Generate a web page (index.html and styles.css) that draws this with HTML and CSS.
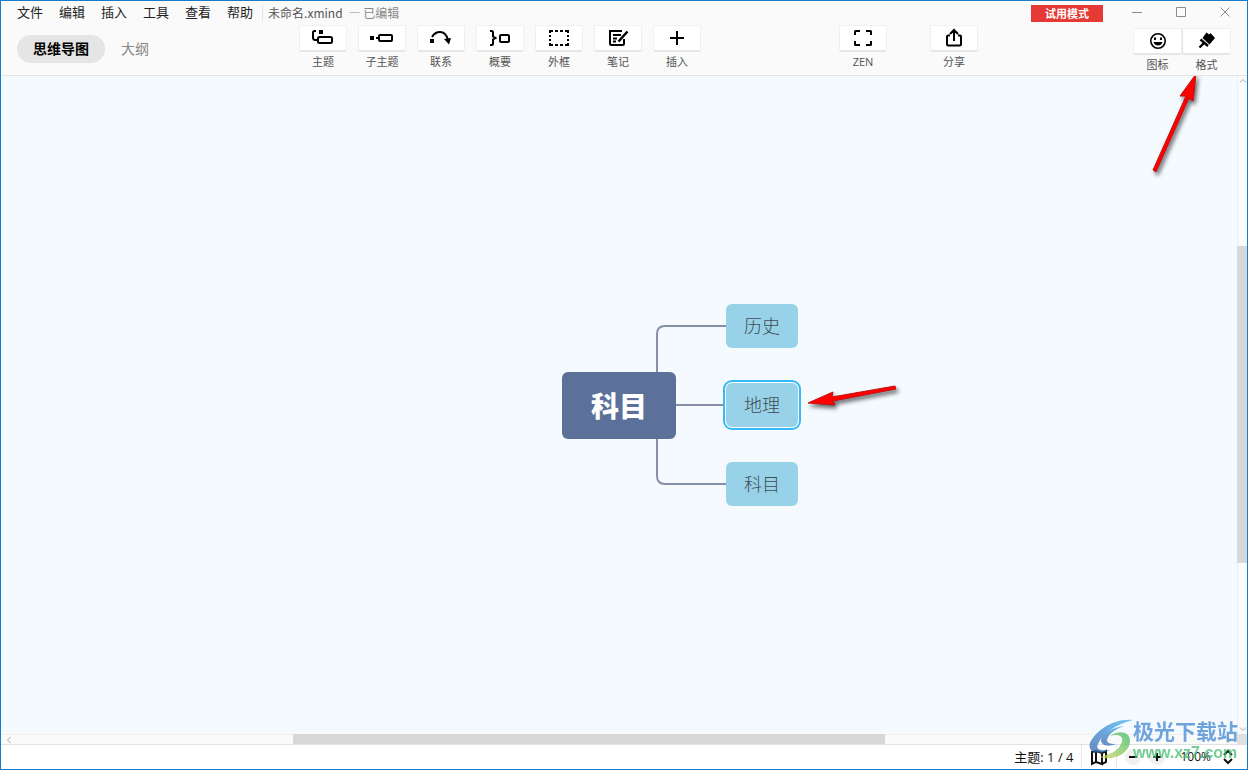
FILE: index.html
```html
<!DOCTYPE html>
<html lang="zh-CN">
<head>
<meta charset="utf-8">
<title>未命名.xmind</title>
<link rel="stylesheet" href="styles.css">
</head>
<body>
<div class="window">
  <header class="header">
    <div class="titlebar">
      <nav class="menu">
        <button>文件</button><button>编辑</button><button>插入</button><button>工具</button><button>查看</button><button>帮助</button>
      </nav>
      <div class="doc"><span class="doc-name">未命名.xmind</span><span class="doc-state">— 已编辑</span></div>
      <button class="trial">试用模式</button>
      <div class="controls">
        <button aria-label="最小化"><svg width="12" height="12" viewBox="0 0 12 12"><path d="M1 5.500h10"/></svg></button>
        <button aria-label="最大化"><svg width="12" height="12" viewBox="0 0 12 12"><path d="M1.500 0.500h9v9h-9z"/></svg></button>
        <button aria-label="关闭"><svg width="12" height="12" viewBox="0 0 12 12"><path d="M1.500 0.500l9 9m0-9l-9 9"/></svg></button>
      </div>
    </div>
    <div class="toolbar">
      <div class="tabs">
        <button class="tab active">思维导图</button>
        <button class="tab">大纲</button>
      </div>
      <div class="tools">
        <button class="tool"><span class="face"><svg width="24" height="24" viewBox="0 0 24 24"><path d="M5 5H3.500Q2 5 2 6.500V11.500Q2 14 4.500 14H6.500"/><rect x="7" y="11" width="14" height="6" rx="1.500"/><path class="solid" d="M8 4h4v4H8z"/></svg></span>主题</button>
        <button class="tool"><span class="face"><svg width="24" height="24" viewBox="0 0 24 24"><path class="solid" d="M0 10h4v4H0z"/><path d="M6 12h3"/><rect x="9" y="9" width="13" height="6" rx="1"/></svg></span>子主题</button>
        <button class="tool"><span class="face"><svg width="24" height="24" viewBox="0 0 24 24"><path class="solid" d="M1 13h4v4H1zM15 13l7-1-2 6.500z"/><path d="M3 11Q6 6 11 6Q17 6 19 14"/></svg></span>联系</button>
        <button class="tool"><span class="face"><svg width="24" height="24" viewBox="0 0 24 24"><path d="M2 5H3.500Q5 5 5 6.500V10.500L7.500 12L5 13.500V17.500Q5 19 3.500 19H2"/><rect x="12" y="9" width="9" height="7" rx="1"/></svg></span>概要</button>
        <button class="tool"><span class="face"><svg width="24" height="24" viewBox="0 0 24 24"><path d="M3 7V5H6M8 5h3M13 5h3M18 5H21V7M21 9v2M21 13v2M21 17V19H18M16 19h-3M11 19H8M6 19H3V17M3 15v-2M3 11V9"/></svg></span>外框</button>
        <button class="tool"><span class="face"><svg width="24" height="24" viewBox="0 0 24 24"><path d="M16 5H4v12.500Q4 19 5.500 19H16.500Q18 19 18 17.500V13M7 9h8M7 12.500h4M7 15.500h3"/><path d="M12.500 15.500L21.500 5.500" stroke-width="2.500"/></svg></span>笔记</button>
        <button class="tool"><span class="face"><svg width="24" height="24" viewBox="0 0 24 24"><path d="M12 5v14M5 12h14"/></svg></span>插入</button>
      </div>
      <button class="tool zen"><span class="face"><svg width="24" height="24" viewBox="0 0 24 24"><path d="M4 9V5.500Q4 5 4.500 5H9M15 5h4.500Q20 5 20 5.500V9M20 15v3.500Q20 19 19.500 19H15M9 19H4.500Q4 19 4 18.500V15"/></svg></span>ZEN</button>
      <button class="tool share"><span class="face"><svg width="24" height="24" viewBox="0 0 24 24"><path d="M8 9.500H6Q5 9.500 5 10.500V18Q5 19.500 6.500 19.500H17.500Q19 19.500 19 18V10.500Q19 9.500 18 9.500H16M12 15V4.500M8 8l4-4 4 4"/></svg></span>分享</button>
      <div class="panels">
        <button class="tool"><span class="face"><svg width="24" height="24" viewBox="0 0 24 24"><circle cx="12" cy="12" r="7.200" stroke-width="1.600"/><path class="solid" d="M8 8.500h2v2.500H8zM14 8.500h2v2.500h-2zM7.500 13h9Q15.500 16.500 12 16.500T7.500 13z"/></svg></span>图标</button>
        <button class="tool"><span class="face"><svg width="24" height="24" viewBox="0 0 24 24"><path class="solid" d="M11.500 3.500L14 5.500 15.500 4 20 9 14.500 15.500 7.500 9z"/><path d="M5.500 10.500L13 17M9 14L4.500 18.500" stroke-width="2.400"/></svg></span>格式</button>
      </div>
    </div>
  </header>

  <main class="workspace">
    <section class="canvas">
      <div class="map">
        <svg class="links" width="1" height="1"><path d="M38 -33V-71Q38 -79 46 -79H107M57 0H107M38 33V71Q38 79 46 79H107"/></svg>
        <div class="topic root">科目</div>
        <div class="topic first">历史</div>
        <div class="topic second selected">地理</div>
        <div class="topic third">科目</div>
        <svg class="pointer near" width="100" height="36" viewBox="0 0 100 36"><path d="M2 20L27 9 26 14 89 3 90 6 27 18 29 22z"/></svg>
      </div>
      <svg class="pointer far" width="56" height="110" viewBox="0 0 56 110"><path d="M46 3L30 25 36 25 3 99 6 101 39 27 43 30z"/></svg>
    </section>
    <div class="vscroll"><svg class="up" width="8" height="8" viewBox="0 0 8 8"><path d="M1 5.500l3-3 3 3"/></svg><span class="thumb"></span><svg class="down" width="8" height="8" viewBox="0 0 8 8"><path d="M1 2.500l3 3 3-3"/></svg></div>
    <div class="hscroll"><svg class="back" width="8" height="8" viewBox="0 0 8 8"><path d="M5.500 1l-3 3 3 3"/></svg><span class="thumb"></span><svg class="next" width="8" height="8" viewBox="0 0 8 8"><path d="M2.500 1l3 3-3 3"/></svg></div>
    <div class="corner"></div>
  </main>

  <footer class="status">
    <span class="count">主题: 1 / 4</span>
    <button class="overview" aria-label="导航图"><svg width="18" height="18" viewBox="0 0 18 18"><path d="M2 4L6 3v11L2 16zM6 3l6 2v11l-6-2M12 5l4-2v11L12 16"/></svg></button>
    <div class="zoom">
      <button class="round" aria-label="缩小"><svg width="10" height="10" viewBox="0 0 10 10"><path d="M1 5h8"/></svg></button>
      <button class="round" aria-label="放大"><svg width="10" height="10" viewBox="0 0 10 10"><path d="M1 5h8M5 1v8"/></svg></button>
      <button class="level">100%<svg width="10" height="16" viewBox="0 0 10 16"><path d="M1 6l4-4 4 4M1 10l4 4 4-4"/></svg></button>
    </div>
  </footer>

  <div class="watermark">
    <svg width="44" height="42" viewBox="0 0 44 42">
      <defs>
        <linearGradient id="sky" x1="0" y1="1" x2="1" y2="0"><stop offset="0" stop-color="#3567ad"/><stop offset="1" stop-color="#42b5f5"/></linearGradient>
        <linearGradient id="leaf" x1="0" y1="1" x2="1" y2="0"><stop offset="0" stop-color="#d4d75a"/><stop offset="1" stop-color="#35b866"/></linearGradient>
      </defs>
      <path fill="url(#sky)" d="M44 1C23-1 6 13 1 24C-2 34 10 36 21 31C13 32 6 31 9 25C14 14 27 5 44 1z"/>
      <path fill="url(#sky)" d="M35 7C24 8 12 15 12 22C13 27 20 28 27 25C21 25 18 24 18 21C20 14 27 10 35 7z"/>
      <path fill="url(#leaf)" d="M21 17C30 14 36 18 32 25C29 32 20 36 10 38C28 43 41 32 41 22C41 12 29 11 21 17z"/>
    </svg>
    <div class="brand"><span class="brand-name">极光下载站</span><span class="brand-url">www.xz7.com</span></div>
  </div>
</div>
</body>
</html>
```
FILE: styles.css
```css
* { box-sizing: border-box; }
body {
  margin: 0;
  font-family: "Open Sans", "Noto Sans CJK SC", sans-serif;
  font-size: 13px;
  color: #222;
}
button {
  margin: 0;
  padding: 0;
  border: 0;
  background: none;
  font: inherit;
  color: inherit;
}
svg { display: block; flex: none; fill: none; stroke: currentColor; }
.window {
  position: relative;
  display: flex;
  flex-direction: column;
  height: 100vh;
  border: 1px solid #1a7bc9;
  background: #fff;
  overflow: hidden;
}

.header { background: #fafafa; border-bottom: 1px solid #e4e4e4; }
.titlebar { display: flex; align-items: center; height: 23px; }
.menu { display: flex; gap: 16px; padding: 0 0 2px 16px; line-height: 20px; }
.doc {
  display: flex;
  gap: 6px;
  margin-left: 9px;
  padding-left: 5px;
  border-left: 1px solid #e4e4e4;
  font-family: "Noto Sans CJK SC", sans-serif;
  font-size: 12px;
  line-height: 16px;
}
.doc-name { color: #555; }
.doc-state { color: #888; }
.trial {
  width: 72px;
  margin: 2px 12px 0 auto;
  background: #e53935;
  color: #fff;
  font-size: 11px;
  font-weight: 700;
  line-height: 17px;
}
.controls { display: flex; color: #8c8c8c; }
.controls button { display: grid; place-items: center; width: 44px; height: 22px; }

.toolbar { display: flex; align-items: flex-start; height: 51px; padding-right: 16px; }
.tabs { display: flex; flex: 0 0 298px; gap: 16px; padding: 11px 0 0 16px; }
.tab { height: 28px; padding-bottom: 2px; font-size: 14px; color: #888; }
.tab.active {
  width: 88px;
  border-radius: 14px;
  background: #e5e5e5;
  color: #000;
  font-weight: 700;
}
.tools { display: flex; gap: 11px; }
.tool {
  display: flex;
  flex-direction: column;
  align-items: center;
  gap: 2px;
  width: 48px;
  padding-top: 1px;
  font-size: 11px;
  line-height: 16px;
  color: #555;
}
.face {
  display: grid;
  place-items: center;
  width: 48px;
  height: 27px;
  border: 1px solid #f0f0f0;
  border-bottom: 2px solid #e6e6e6;
  border-radius: 2px;
  background: #fff;
  color: #000;
}
.face svg { stroke-width: 2; }
.solid { fill: currentColor; stroke: none; }
.zen { margin-left: auto; }
.share { margin: 0 155px 0 43px; }
.panels { display: flex; padding-top: 3px; }
.panels .tool { width: 49px; }
.panels .face { width: 49px; }
.panels .tool + .tool .face { border-left-color: #e2e2e2; }

.workspace {
  display: grid;
  flex: 1;
  min-height: 0;
  grid-template: minmax(0, 1fr) 11px / minmax(0, 1fr) 10px;
}
.canvas { position: relative; overflow: hidden; background: #f5faff; }
.map { position: absolute; left: 50%; top: 50%; }
.links { position: absolute; left: 0; top: 0; overflow: visible; stroke: #8590a8; stroke-width: 2; }
.topic {
  position: absolute;
  left: 107px;
  display: grid;
  place-items: center;
  width: 72px;
  height: 44px;
  padding-bottom: 2px;
  border-radius: 6px;
  background: #97d2e8;
  color: #434b54;
  font-size: 18px;
  font-weight: 300;
}
.root {
  left: -57px;
  top: -33px;
  width: 114px;
  height: 67px;
  background: #5b7199;
  color: #fff;
  font-size: 28px;
  font-weight: 900;
}
.first { top: -101px; }
.second { top: -22px; }
.third { top: 57px; }
.selected { box-shadow: 0 0 0 1px #fff; outline: 2px solid #35baf8; outline-offset: 1px; }
.pointer {
  position: absolute;
  fill: #f00;
  stroke: #c01010;
  stroke-width: 1;
  filter: drop-shadow(2px 3px 2px rgb(0 0 0 / 60%));
}
.near { left: 187px; top: -22px; }
.far { right: 31px; top: -5px; }

.vscroll, .hscroll { position: relative; background: #fafafa; color: #aaa; }
.vscroll { border-left: 1px solid #eee; }
.hscroll { border-top: 1px solid #eee; border-bottom: 1px solid #e2e2e2; }
.thumb { position: absolute; background: #d8d8d8; }
.vscroll .thumb { left: -1px; right: 0; top: 25.8%; height: 48.2%; }
.hscroll .thumb { top: -1px; bottom: 0; left: 23.6%; width: 47.9%; }
.up, .down, .back, .next { position: absolute; }
.up { top: 1px; left: 1px; }
.down { bottom: 1px; left: 1px; }
.back { left: 4px; top: 1px; }
.next { right: 4px; top: 1px; }
.corner { background: #e0e0e0; }

.status { display: flex; justify-content: flex-end; height: 24px; background: #fff; color: #111; line-height: 24px; }
.count { padding-right: 8px; }
.overview {
  display: grid;
  place-items: center;
  width: 36px;
  border: 1px solid #e8e8e8;
  border-width: 0 1px;
}
.overview svg { stroke-width: 2; }
.zoom { display: flex; align-items: center; gap: 8px; padding: 0 14px 0 8px; }
.round { display: grid; place-items: center; width: 16px; height: 16px; border-radius: 50%; background: #f0f0f0; }
.round svg { stroke-width: 2; }
.level { display: flex; align-items: center; gap: 12px; padding-left: 7px; font-size: 12px; }
.level svg { stroke-width: 2; }

.watermark {
  position: absolute;
  right: 9px;
  bottom: 7px;
  display: flex;
  align-items: center;
  opacity: 0.75;
  pointer-events: none;
}
.watermark svg { stroke: none; }
.brand { display: flex; flex-direction: column; }
.brand-name { color: #4188d2; font-size: 21px; font-weight: 700; line-height: 26px; }
.brand-url { color: #45be72; font-family: "Liberation Sans", sans-serif; font-size: 16px; font-weight: 700; line-height: 18px; }
```
